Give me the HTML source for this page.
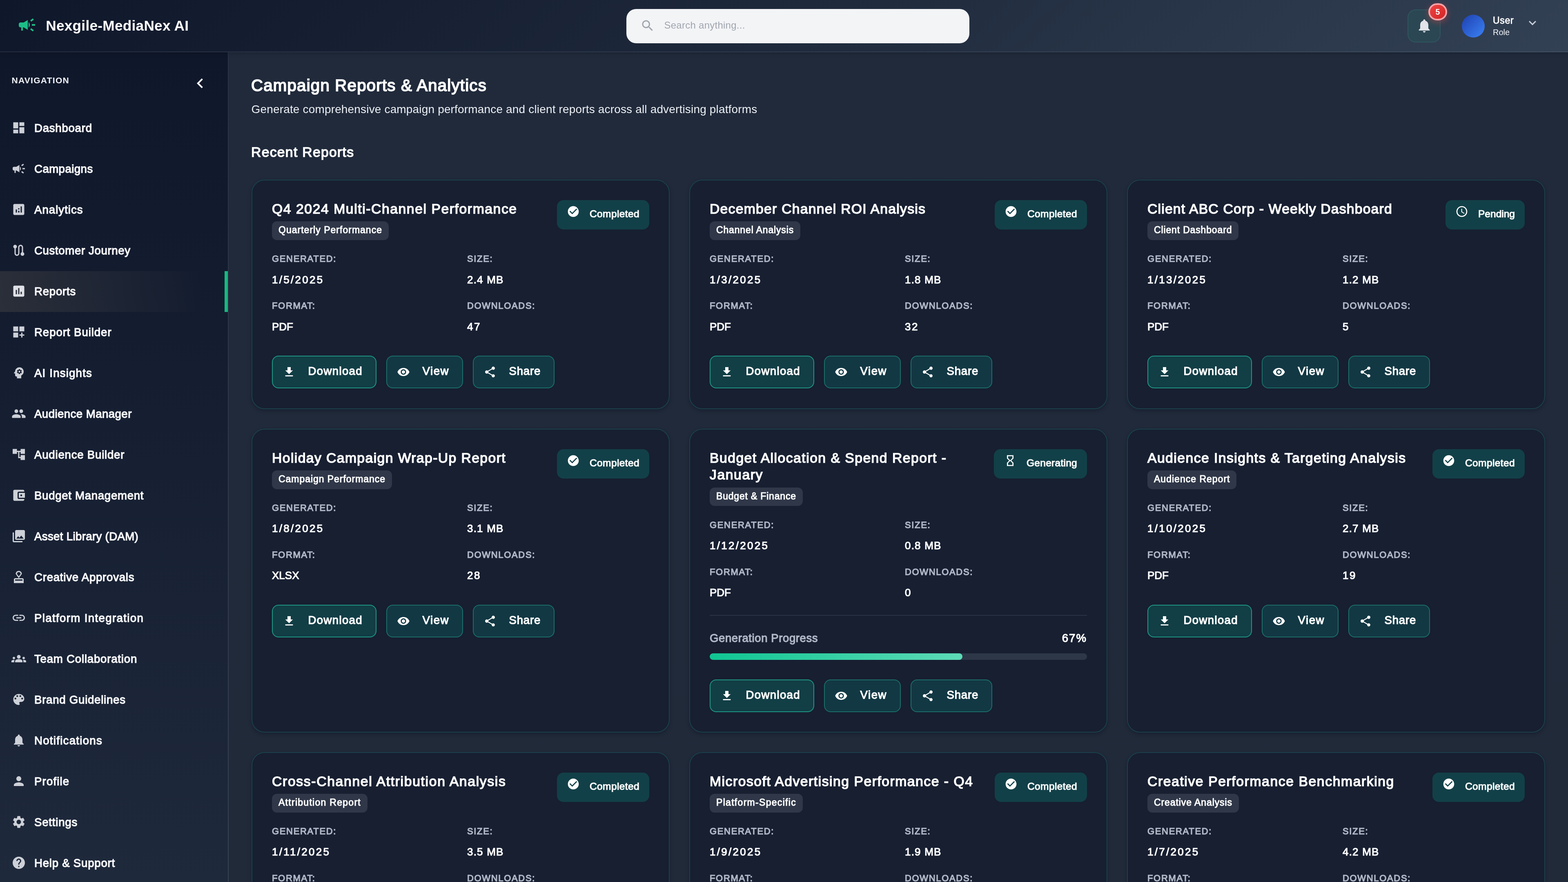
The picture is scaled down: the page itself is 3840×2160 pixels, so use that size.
<!DOCTYPE html>
<html lang="en"><head><meta charset="utf-8"><title>Nexgile-MediaNex AI - Campaign Reports &amp; Analytics</title>
<style>
html{font-size:calc(100vw / 384);overflow:hidden}
*{box-sizing:border-box;margin:0;padding:0}
body{width:384rem;height:216rem;overflow:hidden;background:#1e293b;font-family:"Liberation Sans",sans-serif;color:#fff;position:relative;-webkit-font-smoothing:antialiased}
.ic{display:block;flex:none}
.hdr,.side,.main{will-change:transform}
.sb{font-weight:400;-webkit-text-stroke:0.046em currentColor}
/* header */
.hdr{position:absolute;left:0;top:0;z-index:3;box-shadow:0 0.2rem 1rem rgba(0,0,0,.22);width:384rem;height:12.8rem;border-bottom:0.2rem solid rgba(148,163,184,.16);background:linear-gradient(135deg,#0f172a 0%,#1e293b 50%,#334155 100%)}
.logo{position:absolute;left:4.2rem;top:3.7rem;height:4.8rem;display:flex;align-items:center}
.lic{color:#1dbd86}
.lt{margin-left:2.22rem;font-size:3.52rem;font-weight:700;line-height:4.8rem;position:relative;top:0.21rem;white-space:nowrap;letter-spacing:0.02rem}
.search{position:absolute;left:153.4rem;top:2.2rem;width:84rem;height:8.4rem;border-radius:2.4rem;background:#f3f4f6}
.sic{position:absolute;left:3.43rem;top:2.31rem;color:#a0a5af}
.ph{position:absolute;left:9.25rem;top:1.97rem;font-size:2.4rem;line-height:4rem;color:#a0a5af;white-space:nowrap;letter-spacing:0.018rem}
.bellbtn{position:absolute;left:344.7rem;top:2.3rem;width:8.1rem;height:8.1rem;border-radius:2rem;border:0.2rem solid #2f5560;background:#2b4753}
.bic2{position:absolute;left:1.85rem;top:1.75rem;color:#e1e4e8}
.bdg{position:absolute;left:4.9rem;top:-1.7rem;width:4.6rem;height:4.2rem;border-radius:2.1rem;border:0.4rem solid #f5a3a8;background:linear-gradient(135deg,#ef4444,#d12424);font-size:1.95rem;font-weight:700;line-height:3.4rem;text-align:center;box-shadow:0 0.4rem 1.6rem rgba(239,68,68,.45)}
.user{position:absolute;left:358rem;top:0;height:12.6rem;width:22rem}
.av{position:absolute;left:0;top:3.6rem;width:5.6rem;height:5.6rem;border-radius:50%;background:linear-gradient(135deg,#1e40af 0%,#3b82f6 100%)}
.un{position:absolute;left:7.6rem;top:3.005rem;font-size:2.3rem;line-height:4rem;font-weight:400;-webkit-text-stroke:0.035em #fff;white-space:nowrap}
.ur{position:absolute;left:7.6rem;top:6.18rem;font-size:2rem;line-height:3.4rem;color:#f1f3f6;white-space:nowrap}
.ucv{position:absolute;left:15.5rem;top:3.8rem;width:3.6rem!important;height:3.6rem!important;color:#c8d0da}
/* sidebar */
.side{position:absolute;left:0;top:12.8rem;width:56rem;height:203.2rem;border-right:0.2rem solid rgba(148,163,184,.2);background:linear-gradient(180deg,#0f172a 0%,#1e293b 100%)}
.nl{position:absolute;left:2.85rem;top:4.88rem;font-size:2.1rem;line-height:4rem;font-weight:700;letter-spacing:0.12rem;color:#f1f4f8;white-space:nowrap}
.ncv{position:absolute;left:46.62rem;top:5.22rem;color:#fff}
.nav{position:absolute;left:0;top:13.56rem;width:55.8rem}
.ni{height:10rem;display:flex;align-items:center;padding-left:2.8rem;font-size:2.76rem;line-height:10rem;white-space:nowrap;color:#fafafc}
.ni span{position:relative;top:0.06rem;letter-spacing:-0.01rem}
.nic{margin-right:2rem;color:#cdd0d7;position:relative;top:-0.06rem}
.ni.act{background:linear-gradient(90deg,rgba(92,86,80,.32) 0%,rgba(92,86,80,.2) 35%,rgba(92,86,80,0) 90%);border-right:0.8rem solid #17b881}
.ni.act .nic{color:#dfe1e6}
/* main */
.main{position:absolute;left:56rem;top:12.8rem;width:328rem;height:203.2rem;overflow:hidden;background:linear-gradient(180deg,#202a3b 0%,#212a39 100%)}
.pt{position:absolute;left:5.5rem;top:5.4rem;font-size:4.02rem;line-height:5.6rem;white-space:nowrap;letter-spacing:0.028rem}
.ps{position:absolute;left:5.55rem;top:12.03rem;font-size:2.8rem;line-height:4rem;font-weight:400;color:#eceff3;white-space:nowrap;letter-spacing:0.017rem}
.st{position:absolute;left:5.5rem;top:21.97rem;font-size:3.37rem;line-height:4.8rem;white-space:nowrap;letter-spacing:0.031rem}
.grid{position:absolute;left:5.6rem;top:31.2rem;width:316.8rem;display:grid;grid-template-columns:102.4rem 102.4rem 102.4rem;column-gap:4.8rem;row-gap:4.8rem;align-items:stretch}
.card{position:relative;border:0.2rem solid #1b404b;border-radius:3.2rem;background:#171f31;padding:4.8rem;box-shadow:0 0.4rem 1rem rgba(5,10,25,.3)}
.chead{display:flex;justify-content:space-between;align-items:flex-start}
.ctl{min-width:0}
.ctitle{font-size:3.37rem;line-height:4.16rem;margin-top:0.09rem;margin-bottom:0.01rem;white-space:nowrap;letter-spacing:0.083rem}
.chip{display:inline-block;margin-top:0.96rem;height:4.56rem;padding:0 1.6rem;border-radius:1.2rem;background:#2f3748;font-size:2.3rem;line-height:4.29rem;white-space:nowrap;letter-spacing:0.05rem;vertical-align:top}
.badge{flex:none;height:7.2rem;border-radius:1.6rem;background:#124048;padding:0 2.4rem;display:flex;align-items:flex-start;font-size:2.45rem;line-height:7.2rem;white-space:nowrap}
.badge .bic{margin-top:1.2rem;margin-right:2.4rem}
.badge span{position:relative;top:-0.16rem;letter-spacing:-0.018rem}
.meta{margin-top:2.79rem;display:grid;grid-template-columns:44.6rem 44.6rem;column-gap:3.2rem;row-gap:2.65rem}
.ml{position:relative;top:0.035rem;font-size:2.2rem;line-height:3.6rem;-webkit-text-stroke-width:.06em;text-transform:uppercase;letter-spacing:0.11rem;color:#b0b7c6;white-space:nowrap}
.mv{position:relative;top:0.035rem;margin-top:1.25rem;font-size:2.6rem;line-height:4rem;white-space:nowrap;letter-spacing:0.2rem}
.mv.v0{letter-spacing:0.28rem}.mv.v1{letter-spacing:0.07rem}.mv.v2{letter-spacing:-0.04rem}.mv.v3{letter-spacing:0.16rem}
.prog{margin-top:3.57rem;border-top:0.2rem solid #2a3446;padding-top:0;height:10.9rem;position:relative}
.prow{position:absolute;left:0;right:0;top:2.96rem;display:flex;justify-content:space-between;font-size:2.76rem;line-height:5rem;letter-spacing:0.035rem}
.pl{color:#b0b7c6}
.ptrack{position:absolute;left:0;right:0;top:9.2rem;height:1.6rem;border-radius:0.8rem;background:#2d3748;overflow:hidden}
.pfill{height:100%;border-radius:0.8rem;background:linear-gradient(90deg,#10c592 0%,#5ddbb6 100%)}
.btns{margin-top:5.18rem;margin-bottom:0.1rem;display:flex}
.prog + .btns{margin-top:4.85rem;margin-bottom:0}
.btn{height:8rem;border:0.2rem solid #1b6e69;border-radius:1.6rem;background:#123844;padding:0 3.2rem;display:flex;align-items:center;margin-right:2.4rem;font-size:2.76rem;line-height:7.6rem;white-space:nowrap}
.btn.b1{border-color:#1e9683;background:#123e46}
.btn .bi{margin-left:-0.8rem;margin-right:3.05rem}
.btn span{position:relative;top:-0.19rem;letter-spacing:0.07rem}
.badge span.sP{letter-spacing:-0.06rem}.badge span.sG{letter-spacing:-0.028rem}
.btn span.bv{letter-spacing:0.095rem}.btn span.bs{letter-spacing:0.01rem}

.pt{letter-spacing:0.1222rem}
.st{letter-spacing:0.1308rem}
.ps{letter-spacing:0.0165rem}
.lt{letter-spacing:0.0278rem}
.nl{letter-spacing:0.1278rem}
.ph{letter-spacing:0.0259rem}
.ml{letter-spacing:0.1667rem}
.mv.v0{letter-spacing:0.3286rem}
.mv.v1{letter-spacing:0.12rem}
.mv.v2{letter-spacing:0rem}
.mv.v3{letter-spacing:0.25rem}
.badge span.sC{letter-spacing:0.0391rem}
.badge span.sP{letter-spacing:0.0011rem}
.badge span.sG{letter-spacing:0.0277rem}
.btn span.bd{letter-spacing:0.1348rem}
.btn span.bv{letter-spacing:0.1547rem}
.btn span.bs{letter-spacing:0.0772rem}
.pl{letter-spacing:0.0556rem}
.pv{letter-spacing:0.2rem}
.un{letter-spacing:0.0667rem}
.ur{letter-spacing:0rem}

</style></head>
<body>
<header class="hdr">
  <div class="logo"><svg class="ic lic" viewBox="0 0 24 24" style="width:4.8rem;height:4.8rem;" fill="currentColor"><path d="M18 11v2h4v-2h-4zm-2 6.61c.96.71 2.21 1.65 3.2 2.39.4-.53.8-1.07 1.2-1.6-.99-.74-2.24-1.68-3.2-2.4-.4.54-.8 1.08-1.2 1.61zM20.4 5.6c-.4-.53-.8-1.07-1.2-1.6-.99.74-2.24 1.68-3.2 2.4.4.53.8 1.07 1.2 1.6.96-.72 2.21-1.65 3.2-2.4zM4 9c-1.1 0-2 .9-2 2v2c0 1.1.9 2 2 2h1v4h2v-4h1l5 3V6L8 9H4zm11.5 3c0-1.33-.58-2.53-1.5-3.35v6.69c.92-.81 1.5-2.01 1.5-3.34z"/></svg><span class="lt">Nexgile-MediaNex AI</span></div>
  <div class="search"><svg class="ic sic" viewBox="0 0 24 24" style="width:3.6rem;height:3.6rem;" fill="currentColor"><path d="M15.500 14h-.79l-.28-.27C15.410 12.590 16 11.110 16 9.500 16 5.910 13.090 3 9.500 3S3 5.910 3 9.500 5.910 16 9.500 16c1.610 0 3.090-.59 4.230-1.570l.27.28v.79l5 4.990L20.490 19l-4.990-5zm-6 0C7.010 14 5 11.990 5 9.500S7.010 5 9.500 5 14 7.010 14 9.500 11.990 14 9.500 14z"/></svg><span class="ph">Search anything...</span></div>
  <div class="bellbtn"><svg class="ic bic2" viewBox="0 0 24 24" style="width:4rem;height:4rem;" fill="currentColor"><path d="M12 22c1.100 0 2-.9 2-2h-4c0 1.100.89 2 2 2zm6-6v-5c0-3.070-1.640-5.640-4.500-6.320V4c0-.83-.67-1.500-1.500-1.500s-1.500.67-1.500 1.500v.68C7.630 5.360 6 7.920 6 11v5l-2 2v1h16v-1l-2-2z"/></svg><span class="bdg">5</span></div>
  <div class="user"><div class="av"></div><div class="ut"><div class="un">User</div><div class="ur">Role</div></div><svg class="ic ucv" viewBox="0 0 24 24" style="width:3.2rem;height:3.2rem;" fill="currentColor"><path d="M7.410 8.590L12 13.170l4.590-4.580L18 10l-6 6-6-6 1.410-1.410z"/></svg></div>
</header>
<aside class="side">
  <div class="navh"><span class="nl">NAVIGATION</span><svg class="ic ncv" viewBox="0 0 24 24" style="width:4.8rem;height:4.8rem;" fill="currentColor"><path d="M15.410 7.410L14 6l-6 6 6 6 1.410-1.410L10.830 12z"/></svg></div>
  <nav class="nav">
<div class="ni"><svg class="ic nic" viewBox="0 0 24 24" style="width:3.6rem;height:3.6rem;" fill="currentColor"><path d="M3 13h8V3H3v10zm0 8h8v-6H3v6zm10 0h8V11h-8v10zm0-18v6h8V3h-8z"/></svg><span class="sb nt" style="letter-spacing:0.075rem">Dashboard</span></div>
<div class="ni"><svg class="ic nic" viewBox="0 0 24 24" style="width:3.6rem;height:3.6rem;" fill="currentColor"><path d="M18 11v2h4v-2h-4zm-2 6.61c.96.71 2.21 1.65 3.2 2.39.4-.53.8-1.07 1.2-1.6-.99-.74-2.24-1.68-3.2-2.4-.4.54-.8 1.08-1.2 1.61zM20.4 5.6c-.4-.53-.8-1.07-1.2-1.6-.99.74-2.24 1.68-3.2 2.4.4.53.8 1.07 1.2 1.6.96-.72 2.21-1.65 3.2-2.4zM4 9c-1.1 0-2 .9-2 2v2c0 1.1.9 2 2 2h1v4h2v-4h1l5 3V6L8 9H4zm11.5 3c0-1.33-.58-2.53-1.5-3.35v6.69c.92-.81 1.5-2.01 1.5-3.34z"/></svg><span class="sb nt" style="letter-spacing:0.045rem">Campaigns</span></div>
<div class="ni"><svg class="ic nic" viewBox="0 0 24 24" style="width:3.6rem;height:3.6rem;" fill="currentColor"><path d="M19 3H5c-1.1 0-2 .9-2 2v14c0 1.1.9 2 2 2h14c1.1 0 2-.9 2-2V5c0-1.1-.9-2-2-2zM9 17H7v-5h2v5zm4 0h-2v-3h2v3zm0-5h-2v-2h2v2zm4 5h-2V7h2v10z"/></svg><span class="sb nt" style="letter-spacing:0.1025rem">Analytics</span></div>
<div class="ni"><svg class="ic nic" viewBox="0 0 24 24" style="width:3.6rem;height:3.6rem;" fill="currentColor"><path d="M19 15.18V7c0-2.21-1.79-4-4-4s-4 1.79-4 4v10c0 1.1-.9 2-2 2s-2-.9-2-2V8.82C8.16 8.4 9 7.3 9 6c0-1.66-1.34-3-3-3S3 4.34 3 6c0 1.3.84 2.4 2 2.82V17c0 2.21 1.79 4 4 4s4-1.79 4-4V7c0-1.1.9-2 2-2s2 .9 2 2v8.18c-1.16.41-2 1.51-2 2.82 0 1.66 1.34 3 3 3s3-1.34 3-3c0-1.3-.84-2.4-2-2.82z"/></svg><span class="sb nt" style="letter-spacing:0.0647rem">Customer Journey</span></div>
<div class="ni act"><svg class="ic nic" viewBox="0 0 24 24" style="width:3.6rem;height:3.6rem;" fill="currentColor"><path d="M19 3H5c-1.1 0-2 .9-2 2v14c0 1.1.9 2 2 2h14c1.1 0 2-.9 2-2V5c0-1.1-.9-2-2-2zM9 17H7v-7h2v7zm4 0h-2V7h2v10zm4 0h-2v-4h2v4z"/></svg><span class="sb nt" style="letter-spacing:0.0767rem">Reports</span></div>
<div class="ni"><svg class="ic nic" viewBox="0 0 24 24" style="width:3.6rem;height:3.6rem;" fill="currentColor"><path d="M3 3h8v8H3zm10 0h8v8h-8zM3 13h8v8H3zm15 0h-2v3h-3v2h3v3h2v-3h3v-2h-3z"/></svg><span class="sb nt" style="letter-spacing:0.0938rem">Report Builder</span></div>
<div class="ni"><svg class="ic nic" viewBox="0 0 24 24" style="width:3.6rem;height:3.6rem;" fill="currentColor"><path d="M13 8.57c-.79 0-1.43.64-1.43 1.43s.64 1.43 1.43 1.43 1.43-.64 1.43-1.43-.64-1.43-1.43-1.43z M13 3C9.25 3 6.2 5.94 6.02 9.64L4.1 12.2c-.25.33-.01.8.4.8H6v3c0 1.1.9 2 2 2h1v3h7v-4.680c2.360-1.120 4-3.530 4-6.320 0-3.870-3.130-7-7-7zm3 7c0 .13-.01.26-.02.39l.83.66c.08.06.1.16.05.25l-.8 1.390c-.05.09-.16.12-.24.09l-.99-.4c-.21.16-.43.29-.67.39L14 13.830c-.01.1-.1.17-.2.17h-1.600c-.1 0-.18-.07-.2-.17l-.15-1.060c-.25-.1-.47-.23-.68-.39l-.99.4c-.09.03-.2 0-.25-.09l-.8-1.390c-.05-.08-.03-.19.05-.25l.84-.66c-.01-.13-.02-.26-.02-.39s.02-.27.04-.39l-.85-.66c-.08-.06-.1-.16-.05-.26l.8-1.380c.05-.09.15-.12.24-.09l1 .4c.2-.15.43-.29.67-.39L12 6.170c.02-.1.1-.17.2-.17h1.600c.1 0 .18.07.2.17l.15 1.060c.24.1.46.23.67.39l1-.4c.09-.03.2 0 .24.09l.8 1.380c.05.09.03.2-.05.26l-.85.66c.03.12.04.25.04.39z"/></svg><span class="sb nt" style="letter-spacing:0.12rem">AI Insights</span></div>
<div class="ni"><svg class="ic nic" viewBox="0 0 24 24" style="width:3.6rem;height:3.6rem;" fill="currentColor"><path d="M16 11c1.660 0 2.990-1.340 2.990-3S17.660 5 16 5c-1.660 0-3 1.340-3 3s1.340 3 3 3zm-8 0c1.660 0 2.990-1.340 2.990-3S9.660 5 8 5C6.340 5 5 6.340 5 8s1.340 3 3 3zm0 2c-2.330 0-7 1.170-7 3.500V19h14v-2.500c0-2.330-4.670-3.500-7-3.500zm8 0c-.29 0-.62.02-.97.05 1.160.84 1.970 1.970 1.970 3.450V19h6v-2.500c0-2.330-4.670-3.500-7-3.500z"/></svg><span class="sb nt" style="letter-spacing:0.0447rem">Audience Manager</span></div>
<div class="ni"><svg class="ic nic" viewBox="0 0 24 24" style="width:3.6rem;height:3.6rem;" fill="currentColor"><path d="M22 11V3h-7v3H9V3H2v8h7V8h2v10h4v3h7v-8h-7v3h-2V8h2v3z"/></svg><span class="sb nt" style="letter-spacing:0.0787rem">Audience Builder</span></div>
<div class="ni"><svg class="ic nic" viewBox="0 0 24 24" style="width:3.6rem;height:3.6rem;" fill="currentColor"><path d="M21 18v1c0 1.100-.9 2-2 2H5c-1.110 0-2-.9-2-2V5c0-1.100.89-2 2-2h14c1.100 0 2 .9 2 2v1h-9c-1.110 0-2 .9-2 2v8c0 1.100.89 2 2 2h9zm-9-2h10V8H12v8zm4-2.500c-.83 0-1.500-.67-1.500-1.500s.67-1.500 1.500-1.500 1.500.67 1.500 1.500-.67 1.500-1.500 1.500z"/></svg><span class="sb nt" style="letter-spacing:0.07rem">Budget Management</span></div>
<div class="ni"><svg class="ic nic" viewBox="0 0 24 24" style="width:3.6rem;height:3.6rem;" fill="currentColor"><path d="M22 16V4c0-1.100-.9-2-2-2H8c-1.100 0-2 .9-2 2v12c0 1.100.9 2 2 2h12c1.100 0 2-.9 2-2zm-11-4l2.030 2.710L16 11l4 5H8l3-4zM2 6v14c0 1.100.9 2 2 2h14v-2H4V6H2z"/></svg><span class="sb nt" style="letter-spacing:0.035rem">Asset Library (DAM)</span></div>
<div class="ni"><svg class="ic nic" viewBox="0 0 24 24" style="width:3.6rem;height:3.6rem;" fill="currentColor"><path d="M4 16v6h16v-6c0-1.100-.9-2-2-2H6c-1.100 0-2 .9-2 2zm14 2H6v-2h12v2zM12 2C9.240 2 7 4.240 7 7l5 7 5-7c0-2.760-2.240-5-5-5zm0 9L9 7c0-1.660 1.340-3 3-3s3 1.340 3 3l-3 4z"/></svg><span class="sb nt" style="letter-spacing:0.0759rem">Creative Approvals</span></div>
<div class="ni"><svg class="ic nic" viewBox="0 0 24 24" style="width:3.6rem;height:3.6rem;" fill="currentColor"><path d="M3.900 12c0-1.710 1.390-3.100 3.100-3.100h4V7H7c-2.760 0-5 2.240-5 5s2.240 5 5 5h4v-1.900H7c-1.710 0-3.100-1.390-3.100-3.100zM8 13h8v-2H8v2zm9-6h-4v1.900h4c1.710 0 3.100 1.390 3.100 3.100s-1.390 3.100-3.100 3.100h-4V17h4c2.760 0 5-2.240 5-5s-2.240-5-5-5z"/></svg><span class="sb nt" style="letter-spacing:0.1368rem">Platform Integration</span></div>
<div class="ni"><svg class="ic nic" viewBox="0 0 24 24" style="width:3.6rem;height:3.6rem;" fill="currentColor"><path d="M12 12.750c1.630 0 3.070.39 4.240.9 1.080.48 1.760 1.560 1.760 2.730V18H6v-1.610c0-1.180.68-2.260 1.760-2.730 1.170-.52 2.610-.91 4.240-.91zM4 13c1.100 0 2-.9 2-2s-.9-2-2-2-2 .9-2 2 .9 2 2 2zm1.130 1.100c-.37-.06-.74-.1-1.130-.1-.99 0-1.930.21-2.780.58C.48 14.900 0 15.620 0 16.430V18h4.500v-1.610c0-.83.23-1.610.63-2.290zM20 13c1.100 0 2-.9 2-2s-.9-2-2-2-2 .9-2 2 .9 2 2 2zm4 3.430c0-.81-.48-1.530-1.220-1.850-.85-.37-1.790-.58-2.780-.58-.39 0-.76.04-1.130.1.4.68.63 1.460.63 2.290V18H24v-1.570zM12 6c1.660 0 3 1.340 3 3s-1.340 3-3 3-3-1.340-3-3 1.340-3 3-3z"/></svg><span class="sb nt" style="letter-spacing:0.0794rem">Team Collaboration</span></div>
<div class="ni"><svg class="ic nic" viewBox="0 0 24 24" style="width:3.6rem;height:3.6rem;" fill="currentColor"><path d="M12 3c-4.970 0-9 4.030-9 9s4.030 9 9 9c.83 0 1.500-.67 1.500-1.500 0-.39-.15-.74-.39-1.010-.23-.26-.38-.61-.38-.99 0-.83.67-1.500 1.500-1.500H16c2.760 0 5-2.240 5-5 0-4.420-4.030-8-9-8zm-5.500 9c-.83 0-1.500-.67-1.500-1.500S5.670 9 6.500 9 8 9.670 8 10.500 7.330 12 6.500 12zm3-4C8.670 8 8 7.330 8 6.500S8.670 5 9.500 5s1.500.67 1.500 1.500S10.330 8 9.500 8zm5 0c-.83 0-1.500-.67-1.500-1.500S13.670 5 14.500 5s1.500.67 1.500 1.500S15.330 8 14.500 8zm3 4c-.83 0-1.500-.67-1.500-1.500S16.670 9 17.500 9s1.500.67 1.500 1.500-.67 1.500-1.500 1.500z"/></svg><span class="sb nt" style="letter-spacing:0.0753rem">Brand Guidelines</span></div>
<div class="ni"><svg class="ic nic" viewBox="0 0 24 24" style="width:3.6rem;height:3.6rem;" fill="currentColor"><path d="M12 22c1.100 0 2-.9 2-2h-4c0 1.100.89 2 2 2zm6-6v-5c0-3.070-1.640-5.640-4.500-6.320V4c0-.83-.67-1.500-1.500-1.500s-1.500.67-1.500 1.500v.68C7.630 5.360 6 7.920 6 11v5l-2 2v1h16v-1l-2-2z"/></svg><span class="sb nt" style="letter-spacing:0.1283rem">Notifications</span></div>
<div class="ni"><svg class="ic nic" viewBox="0 0 24 24" style="width:3.6rem;height:3.6rem;" fill="currentColor"><path d="M12 12c2.210 0 4-1.790 4-4s-1.790-4-4-4-4 1.790-4 4 1.790 4 4 4zm0 2c-2.670 0-8 1.340-8 4v2h16v-2c0-2.660-5.330-4-8-4z"/></svg><span class="sb nt" style="letter-spacing:0.1167rem">Profile</span></div>
<div class="ni"><svg class="ic nic" viewBox="0 0 24 24" style="width:3.6rem;height:3.6rem;" fill="currentColor"><path d="M19.140 12.940c.04-.3.06-.61.06-.94 0-.32-.02-.64-.07-.94l2.030-1.580c.18-.14.23-.41.12-.61l-1.920-3.320c-.12-.22-.37-.29-.59-.22l-2.390.96c-.5-.38-1.030-.7-1.620-.94l-.36-2.540c-.04-.24-.24-.41-.48-.41h-3.840c-.24 0-.43.17-.47.41l-.36 2.540c-.59.24-1.130.57-1.620.94l-2.390-.96c-.22-.08-.47 0-.59.22L2.740 8.870c-.12.21-.08.47.12.61l2.030 1.580c-.05.3-.09.63-.09.94s.02.64.07.94l-2.030 1.580c-.18.14-.23.41-.12.61l1.920 3.320c.12.22.37.29.59.22l2.390-.96c.5.38 1.030.7 1.620.94l.36 2.540c.05.24.24.41.48.41h3.840c.24 0 .44-.17.47-.41l.36-2.540c.59-.24 1.130-.56 1.620-.94l2.390.96c.22.08.47 0 .59-.22l1.920-3.320c.12-.22.07-.47-.12-.61l-2.010-1.580zM12 15.600c-1.980 0-3.600-1.620-3.600-3.600s1.620-3.600 3.600-3.600 3.600 1.620 3.600 3.600-1.620 3.600-3.600 3.600z"/></svg><span class="sb nt" style="letter-spacing:0.08rem">Settings</span></div>
<div class="ni"><svg class="ic nic" viewBox="0 0 24 24" style="width:3.6rem;height:3.6rem;" fill="currentColor"><path d="M12 2C6.480 2 2 6.480 2 12s4.480 10 10 10 10-4.480 10-10S17.520 2 12 2zm1 17h-2v-2h2v2zm2.070-7.750l-.9.92C13.450 12.900 13 13.500 13 15h-2v-.5c0-1.100.45-2.100 1.170-2.830l1.240-1.260c.37-.36.59-.86.59-1.410 0-1.100-.9-2-2-2s-2 .9-2 2H8c0-2.210 1.790-4 4-4s4 1.790 4 4c0 .88-.36 1.680-.93 2.250z"/></svg><span class="sb nt" style="letter-spacing:0.0769rem">Help &amp; Support</span></div>
  </nav>
</aside>
<main class="main">
  <h1 class="pt sb">Campaign Reports &amp; Analytics</h1>
  <p class="ps">Generate comprehensive campaign performance and client reports across all advertising platforms</p>
  <h2 class="st sb">Recent Reports</h2>
  <div class="grid">
<div class="card"><div class="chead"><div class="ctl"><div class="ctitle sb"><span class="tl" style="letter-spacing:0.1575rem">Q4 2024 Multi-Channel Performance</span></div><div class="chip sb"><span class="cl" style="letter-spacing:0.1017rem">Quarterly Performance</span></div></div><div class="badge"><svg class="ic bic" viewBox="0 0 24 24" style="width:3.2rem;height:3.2rem;" fill="currentColor"><path d="M12 2C6.480 2 2 6.480 2 12s4.480 10 10 10 10-4.480 10-10S17.520 2 12 2zm-2 15l-5-5 1.410-1.410L10 14.170l7.590-7.590L19 8l-9 9z"/></svg><span class="sb sC">Completed</span></div></div><div class="meta"><div class="mi"><div class="ml sb">Generated:</div><div class="mv v0 sb">1/5/2025</div></div><div class="mi"><div class="ml sb">Size:</div><div class="mv v1 sb">2.4 MB</div></div><div class="mi"><div class="ml sb">Format:</div><div class="mv v2 sb">PDF</div></div><div class="mi"><div class="ml sb">Downloads:</div><div class="mv v3 sb">47</div></div></div><div class="btns"><div class="btn b1"><svg class="ic bi" viewBox="0 0 24 24" style="width:3.2rem;height:3.2rem;" fill="currentColor"><path d="M5 20h14v-2H5v2zM19 9h-4V3H9v6H5l7 7 7-7z"/></svg><span class="sb bd">Download</span></div><div class="btn"><svg class="ic bi" viewBox="0 0 24 24" style="width:3.2rem;height:3.2rem;" fill="currentColor"><path d="M12 4.500C7 4.500 2.730 7.610 1 12c1.730 4.390 6 7.500 11 7.500s9.270-3.110 11-7.500c-1.730-4.390-6-7.500-11-7.500zM12 17c-2.760 0-5-2.240-5-5s2.240-5 5-5 5 2.240 5 5-2.240 5-5 5zm0-8c-1.660 0-3 1.340-3 3s1.340 3 3 3 3-1.340 3-3-1.340-3-3-3z"/></svg><span class="sb bv">View</span></div><div class="btn"><svg class="ic bi" viewBox="0 0 24 24" style="width:3.2rem;height:3.2rem;" fill="currentColor"><path d="M18 16.080c-.76 0-1.440.3-1.960.77L8.910 12.700c.05-.23.09-.46.09-.7s-.04-.47-.09-.7l7.050-4.110c.54.5 1.250.81 2.040.81 1.660 0 3-1.340 3-3s-1.340-3-3-3-3 1.340-3 3c0 .24.04.47.09.7L8.040 9.810C7.500 9.310 6.790 9 6 9c-1.660 0-3 1.340-3 3s1.340 3 3 3c.79 0 1.500-.31 2.040-.81l7.120 4.160c-.05.21-.08.43-.08.65 0 1.610 1.310 2.920 2.920 2.920s2.920-1.310 2.920-2.920-1.310-2.920-2.920-2.920z"/></svg><span class="sb bs">Share</span></div></div></div>
<div class="card"><div class="chead"><div class="ctl"><div class="ctitle sb"><span class="tl" style="letter-spacing:0.1268rem">December Channel ROI Analysis</span></div><div class="chip sb"><span class="cl" style="letter-spacing:0.0847rem">Channel Analysis</span></div></div><div class="badge"><svg class="ic bic" viewBox="0 0 24 24" style="width:3.2rem;height:3.2rem;" fill="currentColor"><path d="M12 2C6.480 2 2 6.480 2 12s4.480 10 10 10 10-4.480 10-10S17.520 2 12 2zm-2 15l-5-5 1.410-1.410L10 14.170l7.590-7.590L19 8l-9 9z"/></svg><span class="sb sC">Completed</span></div></div><div class="meta"><div class="mi"><div class="ml sb">Generated:</div><div class="mv v0 sb">1/3/2025</div></div><div class="mi"><div class="ml sb">Size:</div><div class="mv v1 sb">1.8 MB</div></div><div class="mi"><div class="ml sb">Format:</div><div class="mv v2 sb">PDF</div></div><div class="mi"><div class="ml sb">Downloads:</div><div class="mv v3 sb">32</div></div></div><div class="btns"><div class="btn b1"><svg class="ic bi" viewBox="0 0 24 24" style="width:3.2rem;height:3.2rem;" fill="currentColor"><path d="M5 20h14v-2H5v2zM19 9h-4V3H9v6H5l7 7 7-7z"/></svg><span class="sb bd">Download</span></div><div class="btn"><svg class="ic bi" viewBox="0 0 24 24" style="width:3.2rem;height:3.2rem;" fill="currentColor"><path d="M12 4.500C7 4.500 2.730 7.610 1 12c1.730 4.390 6 7.500 11 7.500s9.270-3.110 11-7.500c-1.730-4.390-6-7.500-11-7.500zM12 17c-2.760 0-5-2.240-5-5s2.240-5 5-5 5 2.240 5 5-2.240 5-5 5zm0-8c-1.660 0-3 1.340-3 3s1.340 3 3 3 3-1.340 3-3-1.340-3-3-3z"/></svg><span class="sb bv">View</span></div><div class="btn"><svg class="ic bi" viewBox="0 0 24 24" style="width:3.2rem;height:3.2rem;" fill="currentColor"><path d="M18 16.080c-.76 0-1.440.3-1.960.77L8.910 12.700c.05-.23.09-.46.09-.7s-.04-.47-.09-.7l7.050-4.110c.54.5 1.250.81 2.040.81 1.660 0 3-1.340 3-3s-1.340-3-3-3-3 1.340-3 3c0 .24.04.47.09.7L8.040 9.810C7.500 9.310 6.790 9 6 9c-1.660 0-3 1.340-3 3s1.340 3 3 3c.79 0 1.500-.31 2.040-.81l7.120 4.160c-.05.21-.08.43-.08.65 0 1.610 1.310 2.920 2.920 2.920s2.920-1.310 2.920-2.920-1.310-2.920-2.920-2.920z"/></svg><span class="sb bs">Share</span></div></div></div>
<div class="card"><div class="chead"><div class="ctl"><div class="ctitle sb"><span class="tl" style="letter-spacing:0.1197rem">Client ABC Corp - Weekly Dashboard</span></div><div class="chip sb"><span class="cl" style="letter-spacing:0.0849rem">Client Dashboard</span></div></div><div class="badge"><svg class="ic bic" viewBox="0 0 24 24" style="width:3.2rem;height:3.2rem;" fill="currentColor"><path d="M11.990 2C6.470 2 2 6.480 2 12s4.470 10 9.990 10C17.520 22 22 17.520 22 12S17.520 2 11.990 2zM12 20c-4.420 0-8-3.580-8-8s3.580-8 8-8 8 3.580 8 8-3.580 8-8 8zm.5-13H11v6l5.250 3.150.75-1.230-4.500-2.670z"/></svg><span class="sb sP">Pending</span></div></div><div class="meta"><div class="mi"><div class="ml sb">Generated:</div><div class="mv v0 sb">1/13/2025</div></div><div class="mi"><div class="ml sb">Size:</div><div class="mv v1 sb">1.2 MB</div></div><div class="mi"><div class="ml sb">Format:</div><div class="mv v2 sb">PDF</div></div><div class="mi"><div class="ml sb">Downloads:</div><div class="mv v3 sb">5</div></div></div><div class="btns"><div class="btn b1"><svg class="ic bi" viewBox="0 0 24 24" style="width:3.2rem;height:3.2rem;" fill="currentColor"><path d="M5 20h14v-2H5v2zM19 9h-4V3H9v6H5l7 7 7-7z"/></svg><span class="sb bd">Download</span></div><div class="btn"><svg class="ic bi" viewBox="0 0 24 24" style="width:3.2rem;height:3.2rem;" fill="currentColor"><path d="M12 4.500C7 4.500 2.730 7.610 1 12c1.730 4.390 6 7.500 11 7.500s9.270-3.110 11-7.500c-1.730-4.390-6-7.500-11-7.500zM12 17c-2.760 0-5-2.240-5-5s2.240-5 5-5 5 2.240 5 5-2.240 5-5 5zm0-8c-1.660 0-3 1.340-3 3s1.340 3 3 3 3-1.340 3-3-1.340-3-3-3z"/></svg><span class="sb bv">View</span></div><div class="btn"><svg class="ic bi" viewBox="0 0 24 24" style="width:3.2rem;height:3.2rem;" fill="currentColor"><path d="M18 16.080c-.76 0-1.440.3-1.960.77L8.910 12.700c.05-.23.09-.46.09-.7s-.04-.47-.09-.7l7.050-4.110c.54.5 1.250.81 2.040.81 1.660 0 3-1.340 3-3s-1.340-3-3-3-3 1.340-3 3c0 .24.04.47.09.7L8.040 9.810C7.500 9.310 6.790 9 6 9c-1.660 0-3 1.340-3 3s1.340 3 3 3c.79 0 1.500-.31 2.040-.81l7.120 4.160c-.05.21-.08.43-.08.65 0 1.610 1.310 2.920 2.920 2.920s2.920-1.310 2.920-2.920-1.310-2.920-2.920-2.920z"/></svg><span class="sb bs">Share</span></div></div></div>
<div class="card"><div class="chead"><div class="ctl"><div class="ctitle sb"><span class="tl" style="letter-spacing:0.1413rem">Holiday Campaign Wrap-Up Report</span></div><div class="chip sb"><span class="cl" style="letter-spacing:0.0955rem">Campaign Performance</span></div></div><div class="badge"><svg class="ic bic" viewBox="0 0 24 24" style="width:3.2rem;height:3.2rem;" fill="currentColor"><path d="M12 2C6.480 2 2 6.480 2 12s4.480 10 10 10 10-4.480 10-10S17.520 2 12 2zm-2 15l-5-5 1.410-1.410L10 14.170l7.590-7.590L19 8l-9 9z"/></svg><span class="sb sC">Completed</span></div></div><div class="meta"><div class="mi"><div class="ml sb">Generated:</div><div class="mv v0 sb">1/8/2025</div></div><div class="mi"><div class="ml sb">Size:</div><div class="mv v1 sb">3.1 MB</div></div><div class="mi"><div class="ml sb">Format:</div><div class="mv v2 sb">XLSX</div></div><div class="mi"><div class="ml sb">Downloads:</div><div class="mv v3 sb">28</div></div></div><div class="btns"><div class="btn b1"><svg class="ic bi" viewBox="0 0 24 24" style="width:3.2rem;height:3.2rem;" fill="currentColor"><path d="M5 20h14v-2H5v2zM19 9h-4V3H9v6H5l7 7 7-7z"/></svg><span class="sb bd">Download</span></div><div class="btn"><svg class="ic bi" viewBox="0 0 24 24" style="width:3.2rem;height:3.2rem;" fill="currentColor"><path d="M12 4.500C7 4.500 2.730 7.610 1 12c1.730 4.390 6 7.500 11 7.500s9.270-3.110 11-7.500c-1.730-4.390-6-7.500-11-7.500zM12 17c-2.760 0-5-2.240-5-5s2.240-5 5-5 5 2.240 5 5-2.240 5-5 5zm0-8c-1.660 0-3 1.340-3 3s1.340 3 3 3 3-1.340 3-3-1.340-3-3-3z"/></svg><span class="sb bv">View</span></div><div class="btn"><svg class="ic bi" viewBox="0 0 24 24" style="width:3.2rem;height:3.2rem;" fill="currentColor"><path d="M18 16.080c-.76 0-1.440.3-1.960.77L8.910 12.700c.05-.23.09-.46.09-.7s-.04-.47-.09-.7l7.050-4.110c.54.5 1.250.81 2.040.81 1.660 0 3-1.340 3-3s-1.340-3-3-3-3 1.340-3 3c0 .24.04.47.09.7L8.040 9.810C7.500 9.310 6.790 9 6 9c-1.660 0-3 1.340-3 3s1.340 3 3 3c.79 0 1.500-.31 2.040-.81l7.120 4.160c-.05.21-.08.43-.08.65 0 1.610 1.310 2.920 2.920 2.920s2.920-1.310 2.920-2.920-1.310-2.920-2.920-2.920z"/></svg><span class="sb bs">Share</span></div></div></div>
<div class="card"><div class="chead"><div class="ctl"><div class="ctitle sb"><span class="tl" style="letter-spacing:0.1485rem">Budget Allocation &amp; Spend Report -</span><br><span class="tl" style="letter-spacing:0.1583rem">January</span></div><div class="chip sb"><span class="cl" style="letter-spacing:0.081rem">Budget &amp; Finance</span></div></div><div class="badge"><svg class="ic bic" viewBox="0 0 24 24" style="width:3.2rem;height:3.2rem;" fill="currentColor"><path d="M6 2v6h.01L6 8.010 10 12l-4 4 .01.01H6V22h12v-5.990h-.01L18 16l-4-4 4-3.990-.01-.01H18V2H6zm10 14.500V20H8v-3.500l4-4 4 4zm-4-5l-4-4V4h8v3.500l-4 4z"/></svg><span class="sb sG">Generating</span></div></div><div class="meta"><div class="mi"><div class="ml sb">Generated:</div><div class="mv v0 sb">1/12/2025</div></div><div class="mi"><div class="ml sb">Size:</div><div class="mv v1 sb">0.8 MB</div></div><div class="mi"><div class="ml sb">Format:</div><div class="mv v2 sb">PDF</div></div><div class="mi"><div class="ml sb">Downloads:</div><div class="mv v3 sb">0</div></div></div><div class="prog"><div class="prow"><span class="pl sb">Generation Progress</span><span class="pv sb">67%</span></div><div class="ptrack"><div class="pfill" style="width:67%"></div></div></div><div class="btns"><div class="btn b1"><svg class="ic bi" viewBox="0 0 24 24" style="width:3.2rem;height:3.2rem;" fill="currentColor"><path d="M5 20h14v-2H5v2zM19 9h-4V3H9v6H5l7 7 7-7z"/></svg><span class="sb bd">Download</span></div><div class="btn"><svg class="ic bi" viewBox="0 0 24 24" style="width:3.2rem;height:3.2rem;" fill="currentColor"><path d="M12 4.500C7 4.500 2.730 7.610 1 12c1.730 4.390 6 7.500 11 7.500s9.270-3.110 11-7.500c-1.730-4.390-6-7.500-11-7.500zM12 17c-2.760 0-5-2.240-5-5s2.240-5 5-5 5 2.240 5 5-2.240 5-5 5zm0-8c-1.660 0-3 1.340-3 3s1.340 3 3 3 3-1.340 3-3-1.340-3-3-3z"/></svg><span class="sb bv">View</span></div><div class="btn"><svg class="ic bi" viewBox="0 0 24 24" style="width:3.2rem;height:3.2rem;" fill="currentColor"><path d="M18 16.080c-.76 0-1.440.3-1.960.77L8.910 12.700c.05-.23.09-.46.09-.7s-.04-.47-.09-.7l7.050-4.110c.54.5 1.250.81 2.040.81 1.660 0 3-1.340 3-3s-1.340-3-3-3-3 1.340-3 3c0 .24.04.47.09.7L8.040 9.810C7.500 9.310 6.790 9 6 9c-1.660 0-3 1.340-3 3s1.340 3 3 3c.79 0 1.500-.31 2.040-.81l7.120 4.160c-.05.21-.08.43-.08.65 0 1.610 1.310 2.920 2.920 2.920s2.920-1.310 2.920-2.920-1.310-2.920-2.920-2.920z"/></svg><span class="sb bs">Share</span></div></div></div>
<div class="card"><div class="chead"><div class="ctl"><div class="ctitle sb"><span class="tl" style="letter-spacing:0.1459rem">Audience Insights &amp; Targeting Analysis</span></div><div class="chip sb"><span class="cl" style="letter-spacing:0.101rem">Audience Report</span></div></div><div class="badge"><svg class="ic bic" viewBox="0 0 24 24" style="width:3.2rem;height:3.2rem;" fill="currentColor"><path d="M12 2C6.480 2 2 6.480 2 12s4.480 10 10 10 10-4.480 10-10S17.520 2 12 2zm-2 15l-5-5 1.410-1.410L10 14.170l7.590-7.590L19 8l-9 9z"/></svg><span class="sb sC">Completed</span></div></div><div class="meta"><div class="mi"><div class="ml sb">Generated:</div><div class="mv v0 sb">1/10/2025</div></div><div class="mi"><div class="ml sb">Size:</div><div class="mv v1 sb">2.7 MB</div></div><div class="mi"><div class="ml sb">Format:</div><div class="mv v2 sb">PDF</div></div><div class="mi"><div class="ml sb">Downloads:</div><div class="mv v3 sb">19</div></div></div><div class="btns"><div class="btn b1"><svg class="ic bi" viewBox="0 0 24 24" style="width:3.2rem;height:3.2rem;" fill="currentColor"><path d="M5 20h14v-2H5v2zM19 9h-4V3H9v6H5l7 7 7-7z"/></svg><span class="sb bd">Download</span></div><div class="btn"><svg class="ic bi" viewBox="0 0 24 24" style="width:3.2rem;height:3.2rem;" fill="currentColor"><path d="M12 4.500C7 4.500 2.730 7.610 1 12c1.730 4.390 6 7.500 11 7.500s9.270-3.110 11-7.500c-1.730-4.390-6-7.500-11-7.500zM12 17c-2.760 0-5-2.240-5-5s2.240-5 5-5 5 2.240 5 5-2.240 5-5 5zm0-8c-1.660 0-3 1.340-3 3s1.340 3 3 3 3-1.340 3-3-1.340-3-3-3z"/></svg><span class="sb bv">View</span></div><div class="btn"><svg class="ic bi" viewBox="0 0 24 24" style="width:3.2rem;height:3.2rem;" fill="currentColor"><path d="M18 16.080c-.76 0-1.440.3-1.960.77L8.910 12.700c.05-.23.09-.46.09-.7s-.04-.47-.09-.7l7.050-4.110c.54.5 1.250.81 2.040.81 1.660 0 3-1.340 3-3s-1.340-3-3-3-3 1.340-3 3c0 .24.04.47.09.7L8.040 9.810C7.500 9.310 6.790 9 6 9c-1.660 0-3 1.340-3 3s1.340 3 3 3c.79 0 1.500-.31 2.040-.81l7.120 4.160c-.05.21-.08.43-.08.65 0 1.610 1.310 2.920 2.920 2.920s2.920-1.310 2.920-2.920-1.310-2.920-2.920-2.920z"/></svg><span class="sb bs">Share</span></div></div></div>
<div class="card"><div class="chead"><div class="ctl"><div class="ctitle sb"><span class="tl" style="letter-spacing:0.1667rem">Cross-Channel Attribution Analysis</span></div><div class="chip sb"><span class="cl" style="letter-spacing:0.1279rem">Attribution Report</span></div></div><div class="badge"><svg class="ic bic" viewBox="0 0 24 24" style="width:3.2rem;height:3.2rem;" fill="currentColor"><path d="M12 2C6.480 2 2 6.480 2 12s4.480 10 10 10 10-4.480 10-10S17.520 2 12 2zm-2 15l-5-5 1.410-1.410L10 14.170l7.590-7.590L19 8l-9 9z"/></svg><span class="sb sC">Completed</span></div></div><div class="meta"><div class="mi"><div class="ml sb">Generated:</div><div class="mv v0 sb">1/11/2025</div></div><div class="mi"><div class="ml sb">Size:</div><div class="mv v1 sb">3.5 MB</div></div><div class="mi"><div class="ml sb">Format:</div><div class="mv v2 sb">PDF</div></div><div class="mi"><div class="ml sb">Downloads:</div><div class="mv v3 sb">41</div></div></div><div class="btns"><div class="btn b1"><svg class="ic bi" viewBox="0 0 24 24" style="width:3.2rem;height:3.2rem;" fill="currentColor"><path d="M5 20h14v-2H5v2zM19 9h-4V3H9v6H5l7 7 7-7z"/></svg><span class="sb bd">Download</span></div><div class="btn"><svg class="ic bi" viewBox="0 0 24 24" style="width:3.2rem;height:3.2rem;" fill="currentColor"><path d="M12 4.500C7 4.500 2.730 7.610 1 12c1.730 4.390 6 7.500 11 7.500s9.270-3.110 11-7.500c-1.730-4.390-6-7.500-11-7.500zM12 17c-2.760 0-5-2.240-5-5s2.240-5 5-5 5 2.240 5 5-2.240 5-5 5zm0-8c-1.660 0-3 1.340-3 3s1.340 3 3 3 3-1.340 3-3-1.340-3-3-3z"/></svg><span class="sb bv">View</span></div><div class="btn"><svg class="ic bi" viewBox="0 0 24 24" style="width:3.2rem;height:3.2rem;" fill="currentColor"><path d="M18 16.080c-.76 0-1.440.3-1.960.77L8.910 12.700c.05-.23.09-.46.09-.7s-.04-.47-.09-.7l7.050-4.110c.54.5 1.250.81 2.040.81 1.660 0 3-1.340 3-3s-1.340-3-3-3-3 1.340-3 3c0 .24.04.47.09.7L8.040 9.810C7.500 9.310 6.790 9 6 9c-1.660 0-3 1.340-3 3s1.340 3 3 3c.79 0 1.500-.31 2.040-.81l7.120 4.160c-.05.21-.08.43-.08.65 0 1.610 1.310 2.920 2.920 2.920s2.920-1.310 2.920-2.920-1.310-2.920-2.920-2.920z"/></svg><span class="sb bs">Share</span></div></div></div>
<div class="card"><div class="chead"><div class="ctl"><div class="ctitle sb"><span class="tl" style="letter-spacing:0.1514rem">Microsoft Advertising Performance - Q4</span></div><div class="chip sb"><span class="cl" style="letter-spacing:0.1304rem">Platform-Specific</span></div></div><div class="badge"><svg class="ic bic" viewBox="0 0 24 24" style="width:3.2rem;height:3.2rem;" fill="currentColor"><path d="M12 2C6.480 2 2 6.480 2 12s4.480 10 10 10 10-4.480 10-10S17.520 2 12 2zm-2 15l-5-5 1.410-1.410L10 14.170l7.590-7.590L19 8l-9 9z"/></svg><span class="sb sC">Completed</span></div></div><div class="meta"><div class="mi"><div class="ml sb">Generated:</div><div class="mv v0 sb">1/9/2025</div></div><div class="mi"><div class="ml sb">Size:</div><div class="mv v1 sb">1.9 MB</div></div><div class="mi"><div class="ml sb">Format:</div><div class="mv v2 sb">PDF</div></div><div class="mi"><div class="ml sb">Downloads:</div><div class="mv v3 sb">23</div></div></div><div class="btns"><div class="btn b1"><svg class="ic bi" viewBox="0 0 24 24" style="width:3.2rem;height:3.2rem;" fill="currentColor"><path d="M5 20h14v-2H5v2zM19 9h-4V3H9v6H5l7 7 7-7z"/></svg><span class="sb bd">Download</span></div><div class="btn"><svg class="ic bi" viewBox="0 0 24 24" style="width:3.2rem;height:3.2rem;" fill="currentColor"><path d="M12 4.500C7 4.500 2.730 7.610 1 12c1.730 4.390 6 7.500 11 7.500s9.270-3.110 11-7.500c-1.730-4.390-6-7.500-11-7.500zM12 17c-2.760 0-5-2.240-5-5s2.240-5 5-5 5 2.240 5 5-2.240 5-5 5zm0-8c-1.660 0-3 1.340-3 3s1.340 3 3 3 3-1.340 3-3-1.340-3-3-3z"/></svg><span class="sb bv">View</span></div><div class="btn"><svg class="ic bi" viewBox="0 0 24 24" style="width:3.2rem;height:3.2rem;" fill="currentColor"><path d="M18 16.080c-.76 0-1.440.3-1.960.77L8.910 12.700c.05-.23.09-.46.09-.7s-.04-.47-.09-.7l7.050-4.110c.54.5 1.250.81 2.040.81 1.660 0 3-1.340 3-3s-1.340-3-3-3-3 1.340-3 3c0 .24.04.47.09.7L8.040 9.810C7.500 9.310 6.790 9 6 9c-1.660 0-3 1.340-3 3s1.340 3 3 3c.79 0 1.500-.31 2.040-.81l7.120 4.160c-.05.21-.08.43-.08.65 0 1.610 1.310 2.920 2.920 2.920s2.920-1.310 2.920-2.920-1.310-2.920-2.920-2.920z"/></svg><span class="sb bs">Share</span></div></div></div>
<div class="card"><div class="chead"><div class="ctl"><div class="ctitle sb"><span class="tl" style="letter-spacing:0.1594rem">Creative Performance Benchmarking</span></div><div class="chip sb"><span class="cl" style="letter-spacing:0.0916rem">Creative Analysis</span></div></div><div class="badge"><svg class="ic bic" viewBox="0 0 24 24" style="width:3.2rem;height:3.2rem;" fill="currentColor"><path d="M12 2C6.480 2 2 6.480 2 12s4.480 10 10 10 10-4.480 10-10S17.520 2 12 2zm-2 15l-5-5 1.410-1.410L10 14.170l7.590-7.590L19 8l-9 9z"/></svg><span class="sb sC">Completed</span></div></div><div class="meta"><div class="mi"><div class="ml sb">Generated:</div><div class="mv v0 sb">1/7/2025</div></div><div class="mi"><div class="ml sb">Size:</div><div class="mv v1 sb">4.2 MB</div></div><div class="mi"><div class="ml sb">Format:</div><div class="mv v2 sb">PDF</div></div><div class="mi"><div class="ml sb">Downloads:</div><div class="mv v3 sb">36</div></div></div><div class="btns"><div class="btn b1"><svg class="ic bi" viewBox="0 0 24 24" style="width:3.2rem;height:3.2rem;" fill="currentColor"><path d="M5 20h14v-2H5v2zM19 9h-4V3H9v6H5l7 7 7-7z"/></svg><span class="sb bd">Download</span></div><div class="btn"><svg class="ic bi" viewBox="0 0 24 24" style="width:3.2rem;height:3.2rem;" fill="currentColor"><path d="M12 4.500C7 4.500 2.730 7.610 1 12c1.730 4.390 6 7.500 11 7.500s9.270-3.110 11-7.500c-1.730-4.390-6-7.500-11-7.500zM12 17c-2.760 0-5-2.240-5-5s2.240-5 5-5 5 2.240 5 5-2.240 5-5 5zm0-8c-1.660 0-3 1.340-3 3s1.340 3 3 3 3-1.340 3-3-1.340-3-3-3z"/></svg><span class="sb bv">View</span></div><div class="btn"><svg class="ic bi" viewBox="0 0 24 24" style="width:3.2rem;height:3.2rem;" fill="currentColor"><path d="M18 16.080c-.76 0-1.440.3-1.960.77L8.910 12.700c.05-.23.09-.46.09-.7s-.04-.47-.09-.7l7.050-4.110c.54.5 1.250.81 2.040.81 1.660 0 3-1.340 3-3s-1.340-3-3-3-3 1.340-3 3c0 .24.04.47.09.7L8.040 9.810C7.500 9.310 6.790 9 6 9c-1.660 0-3 1.340-3 3s1.340 3 3 3c.79 0 1.500-.31 2.040-.81l7.120 4.160c-.05.21-.08.43-.08.65 0 1.610 1.310 2.920 2.920 2.920s2.920-1.310 2.920-2.920-1.310-2.920-2.920-2.920z"/></svg><span class="sb bs">Share</span></div></div></div>
  </div>
</main>
</body></html>
